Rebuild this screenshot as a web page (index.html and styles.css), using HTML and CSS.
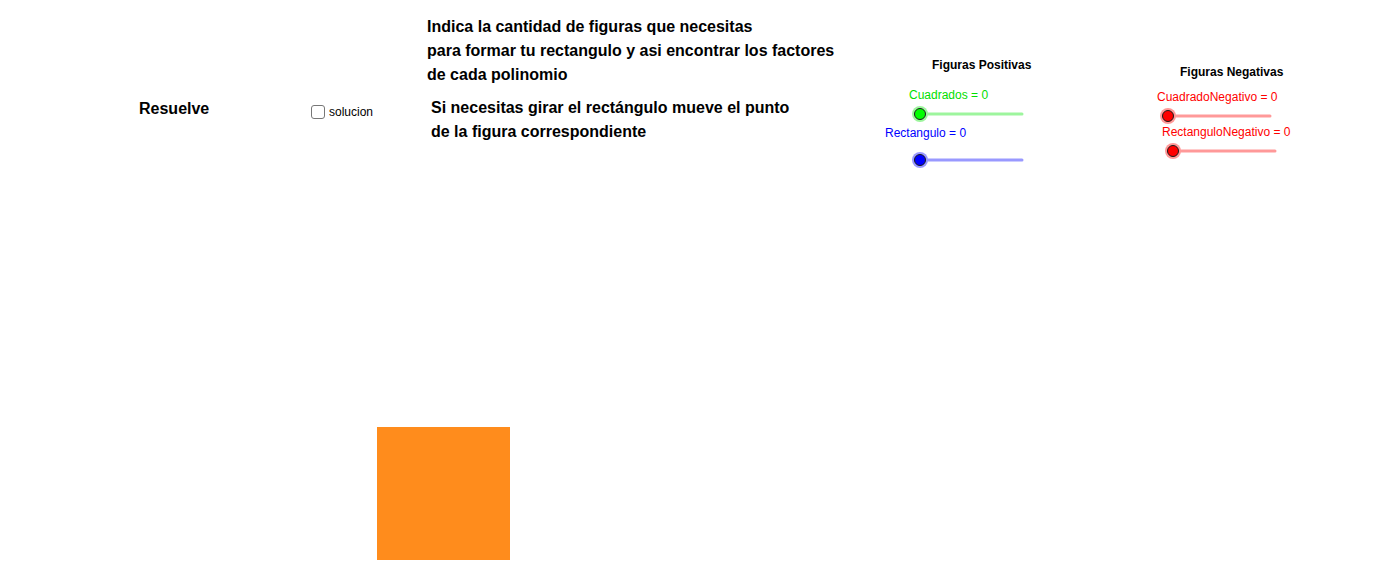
FILE: index.html
```html
<!DOCTYPE html>
<html lang="es">
<head>
<meta charset="utf-8">
<title>Factorización con figuras</title>
<link rel="stylesheet" href="styles.css">
</head>
<body>
<div class="canvas">
  <div class="label resuelve">Resuelve</div>
  <label class="check">
    <span class="box"></span>
    <span class="check-text">solucion</span>
  </label>
  <div class="text instr1">
    <div>Indica la cantidad de figuras que necesitas</div>
    <div>para formar tu rectangulo y asi encontrar los factores</div>
    <div>de cada polinomio</div>
  </div>
  <div class="text instr2">
    <div>Si necesitas girar el rectángulo mueve el punto</div>
    <div>de la figura correspondiente</div>
  </div>

  <div class="title pos-title">Figuras Positivas</div>
  <div class="slabel green cuad-lbl">Cuadrados = 0</div>
  <svg class="slider s-cuad" width="120" height="20" viewBox="0 0 120 20">
    <line x1="10" y1="10" x2="112" y2="10" stroke="#9df59d" stroke-width="3" stroke-linecap="round"/>
    <circle cx="10" cy="10" r="8" fill="#9df59d"/>
    <circle cx="10" cy="10" r="5.5" fill="#00ff00" stroke="#1a1a1a" stroke-width="1"/>
  </svg>
  <div class="slabel blue rect-lbl">Rectangulo = 0</div>
  <svg class="slider s-rect" width="120" height="20" viewBox="0 0 120 20">
    <line x1="10" y1="10" x2="112" y2="10" stroke="#9999ff" stroke-width="3" stroke-linecap="round"/>
    <circle cx="10" cy="10" r="8" fill="#9999ff"/>
    <circle cx="10" cy="10" r="5.5" fill="#0000ff" stroke="#1a1a1a" stroke-width="1"/>
  </svg>

  <div class="title neg-title">Figuras Negativas</div>
  <div class="slabel red cuadn-lbl">CuadradoNegativo = 0</div>
  <svg class="slider s-cuadn" width="120" height="20" viewBox="0 0 120 20">
    <line x1="10" y1="10" x2="112" y2="10" stroke="#ff9999" stroke-width="3" stroke-linecap="round"/>
    <circle cx="10" cy="10" r="8" fill="#ff9999"/>
    <circle cx="10" cy="10" r="5.5" fill="#ff0000" stroke="#1a1a1a" stroke-width="1"/>
  </svg>
  <div class="slabel red rectn-lbl">RectanguloNegativo = 0</div>
  <svg class="slider s-rectn" width="120" height="20" viewBox="0 0 120 20">
    <line x1="10" y1="10" x2="112" y2="10" stroke="#ff9999" stroke-width="3" stroke-linecap="round"/>
    <circle cx="10" cy="10" r="8" fill="#ff9999"/>
    <circle cx="10" cy="10" r="5.5" fill="#ff0000" stroke="#1a1a1a" stroke-width="1"/>
  </svg>

  <div class="square"></div>
</div>
</body>
</html>
```

FILE: styles.css
```css
html, body {
  margin: 0;
  padding: 0;
  background: #ffffff;
}
body {
  font-family: "Liberation Sans", Arial, sans-serif;
  color: #000;
}
.canvas {
  position: relative;
  width: 1382px;
  height: 582px;
  overflow: hidden;
  background: #fff;
}
.canvas > * {
  position: absolute;
}
.label.resuelve {
  left: 139px;
  top: 100px;
  font-size: 16px;
  font-weight: bold;
  line-height: 18px;
}
.check {
  left: 311px;
  top: 104px;
  display: flex;
  align-items: center;
  gap: 4px;
  font-size: 12px;
  line-height: 16px;
}
.check .box {
  width: 12px;
  height: 12px;
  border: 1px solid #777;
  border-radius: 3px;
  background: #fff;
}
.text {
  font-size: 16px;
  font-weight: bold;
  line-height: 24px;
}
.instr1 {
  left: 427px;
  top: 15px;
}
.instr2 {
  left: 431px;
  top: 96px;
}
.title {
  font-size: 12px;
  font-weight: bold;
  line-height: 14px;
}
.pos-title {
  left: 932px;
  top: 58px;
}
.neg-title {
  left: 1180px;
  top: 65px;
}
.slabel {
  font-size: 12px;
  line-height: 14px;
}
.green { color: #00e000; }
.blue { color: #0000ff; }
.red { color: #ff0000; }
.cuad-lbl { left: 909px; top: 88px; }
.rect-lbl { left: 885px; top: 126px; }
.cuadn-lbl { left: 1157px; top: 90px; }
.rectn-lbl { left: 1162px; top: 125px; }
.s-cuad { left: 910px; top: 104px; }
.s-rect { left: 910px; top: 150px; }
.s-cuadn { left: 1158px; top: 106px; }
.s-rectn { left: 1163px; top: 141px; }
.square {
  left: 377px;
  top: 427px;
  width: 133px;
  height: 133px;
  background: #ff8c1c;
}
```
